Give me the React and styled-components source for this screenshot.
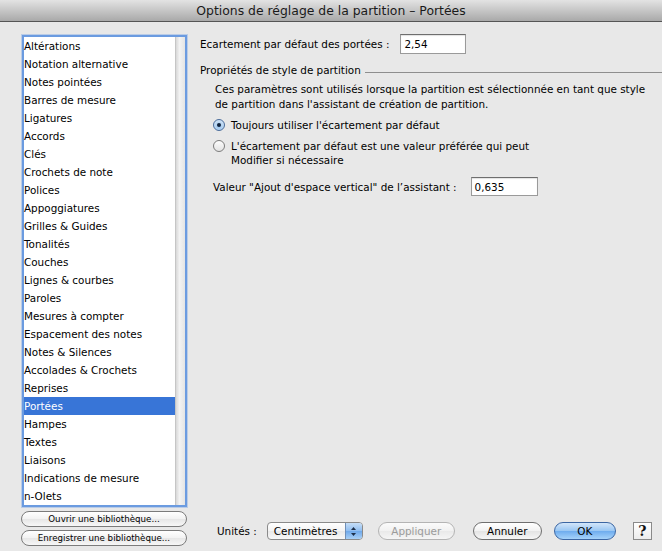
import React from 'react';
import styled, { createGlobalStyle } from 'styled-components';

const GlobalStyle = createGlobalStyle`
  html, body {
    margin: 0;
    padding: 0;
    background: #e8e8e8;
  }
  body {
    font-family: 'DejaVu Sans', 'Lucida Grande', sans-serif;
    font-size: 10.4px;
    color: #000;
  }
  * {
    box-sizing: border-box;
  }
`;

const Window = styled.div`
  width: 662px;
  height: 551px;
  display: flex;
  flex-direction: column;
  background: #e8e8e8;
  overflow: hidden;
`;

const TitleBar = styled.div`
  height: 22px;
  flex: none;
  display: flex;
  align-items: center;
  justify-content: center;
  background: linear-gradient(#e3e3e3, #a9a9a9);
  border-bottom: 1px solid #555;
  font-size: 12.4px;
  color: #1a1a1a;
`;

const Body = styled.div`
  flex: 1;
  display: flex;
  min-height: 0;
`;

const Sidebar = styled.div`
  width: 187px;
  flex: none;
  padding: 13px 0 0 21px;
  display: flex;
  flex-direction: column;
`;

const ListBox = styled.div`
  width: 165px;
  height: 472px;
  margin-left: 1px;
  display: flex;
  border: 2px solid #6b9be0;
  box-shadow: 0 0 0 1px rgba(130, 170, 230, 0.45);
  background: #fff;
`;

const Items = styled.ul`
  flex: 1;
  list-style: none;
  margin: 0;
  padding: 0;
`;

const Item = styled.li`
  height: 18px;
  line-height: 18px;
  padding-left: 0;
  white-space: nowrap;
  background: ${({ selected }) => (selected ? '#3875d7' : 'transparent')};
  color: ${({ selected }) => (selected ? '#fff' : '#000')};
`;

const ScrollTrack = styled.div`
  width: 10px;
  background: linear-gradient(to right, #b4b4b4 0, #d8d8d8 1px, #f3f3f3 45%, #e4e4e4 100%);
`;

const PillButton = styled.button`
  width: 166px;
  height: 16px;
  margin-top: ${({ gap }) => gap}px;
  padding: 0;
  border: 1px solid #7b7b7b;
  border-radius: 8px;
  background: linear-gradient(#ffffff, #f2f2f2 50%, #e6e6e6 51%, #f7f7f7);
  font-family: inherit;
  font-size: 8.7px;
  color: #000;
  line-height: 14px;
`;

const Main = styled.div`
  flex: 1;
  display: flex;
  flex-direction: column;
  padding: 12px 0 11px 13px;
`;

const FieldRow = styled.div`
  display: flex;
  align-items: center;
  height: ${({ h }) => h}px;
  margin-left: ${({ indent }) => indent || 0}px;
  margin-top: ${({ top }) => top || 0}px;
`;

const TextInput = styled.div`
  width: ${({ w }) => w}px;
  height: ${({ h }) => h}px;
  margin-left: ${({ gap }) => gap}px;
  border: 1px solid #9a9a9a;
  border-top-color: #6e6e6e;
  background: #fff;
  box-shadow: inset 0 1px 1px rgba(0, 0, 0, 0.12);
  padding-left: 3px;
  display: flex;
  align-items: center;
`;

const SectionHeader = styled.div`
  display: flex;
  align-items: flex-end;
  height: 14px;
  margin-top: 8px;
`;

const Rule = styled.div`
  flex: 1;
  height: 1px;
  background: #8e8e8e;
  margin: 0 0 3px 4px;
`;

const Description = styled.p`
  margin: 6px 0 0 15px;
  line-height: 15px;
`;

const RadioRow = styled.div`
  display: flex;
  align-items: flex-start;
  margin: ${({ top }) => top}px 0 0 13px;
  line-height: 14px;
`;

const Radio = styled.span`
  position: relative;
  flex: none;
  width: 12px;
  height: 12px;
  margin: 1px 6px 0 0;
  border-radius: 50%;
  border: 1px solid ${({ checked }) => (checked ? '#4a6c9b' : '#7c7c7c')};
  background: ${({ checked }) =>
    checked
      ? 'radial-gradient(circle at 50% 70%, #9cc6f0 0, #b9d6f2 45%, #dbe9f7 100%)'
      : 'linear-gradient(#fdfdfd, #e3e3e3)'};

  &::after {
    content: '';
    display: ${({ checked }) => (checked ? 'block' : 'none')};
    position: absolute;
    left: 3px;
    top: 3px;
    width: 4px;
    height: 4px;
    border-radius: 50%;
    background: #10223c;
  }
`;

const Footer = styled.div`
  margin-top: auto;
  display: flex;
  align-items: center;
  height: 18px;
  padding-left: 17px;
`;

const Select = styled.div`
  width: 96px;
  height: 18px;
  margin-left: 10px;
  display: flex;
  border: 1px solid #8a8a8a;
  border-radius: 4px;
  overflow: hidden;
  background: linear-gradient(#ffffff, #f3f3f3 50%, #e8e8e8 51%, #f8f8f8);
`;

const SelectLabel = styled.span`
  flex: 1;
  padding-left: 6px;
  line-height: 16px;
`;

const SelectArrows = styled.span`
  width: 17px;
  display: flex;
  align-items: center;
  justify-content: center;
  border-left: 1px solid #6f8fb8;
  background: linear-gradient(#c6def7, #8fbdf0 50%, #6ea8ea 51%, #a9d0f6);
`;

const Button = styled.button`
  width: ${({ w }) => w}px;
  height: 18px;
  margin-left: ${({ gap }) => gap}px;
  padding: 0;
  border: 1px solid ${({ variant }) => (variant === 'default' ? '#3b66a3' : variant === 'disabled' ? '#b4b4b4' : '#6f6f6f')};
  border-radius: 9px;
  font-family: inherit;
  font-size: 10.4px;
  line-height: 16px;
  color: ${({ variant }) => (variant === 'disabled' ? '#9b9b9b' : '#000')};
  background: ${({ variant }) =>
    variant === 'default'
      ? 'linear-gradient(#d3e6fa, #98c6f3 50%, #6eacee 51%, #a6d3fa)'
      : variant === 'disabled'
        ? 'linear-gradient(#fbfbfb, #f1f1f1 50%, #e9e9e9 51%, #f5f5f5)'
        : 'linear-gradient(#ffffff, #f2f2f2 50%, #e4e4e4 51%, #f6f6f6)'};
`;

const HelpButton = styled.button`
  width: 19px;
  height: 18px;
  margin-left: 17px;
  padding: 0;
  border: 1px solid #8a8a8a;
  background: linear-gradient(#ffffff, #ececec);
  font-family: 'DejaVu Serif', serif;
  font-weight: bold;
  font-size: 14px;
  line-height: 16px;
  color: #111;
`;

const items = [
  'Altérations',
  'Notation alternative',
  'Notes pointées',
  'Barres de mesure',
  'Ligatures',
  'Accords',
  'Clés',
  'Crochets de note',
  'Polices',
  'Appoggiatures',
  'Grilles & Guides',
  'Tonalités',
  'Couches',
  'Lignes & courbes',
  'Paroles',
  'Mesures à compter',
  'Espacement des notes',
  'Notes & Silences',
  'Accolades & Crochets',
  'Reprises',
  'Portées',
  'Hampes',
  'Textes',
  'Liaisons',
  'Indications de mesure',
  'n-Olets',
];

export default function App() {
  return (
    <Window>
      <GlobalStyle />
      <TitleBar>Options de réglage de la partition – Portées</TitleBar>
      <Body>
        <Sidebar>
          <ListBox>
            <Items>
              {items.map((label) => (
                <Item key={label} selected={label === 'Portées'}>
                  {label}
                </Item>
              ))}
            </Items>
            <ScrollTrack />
          </ListBox>
          <PillButton gap={4}>Ouvrir une bibliothèque...</PillButton>
          <PillButton gap={3}>Enregistrer une bibliothèque...</PillButton>
        </Sidebar>
        <Main>
          <FieldRow h={20}>
            <span>Ecartement par défaut des portées :</span>
            <TextInput w={66} h={20} gap={11}>2,54</TextInput>
          </FieldRow>
          <SectionHeader>
            <span>Propriétés de style de partition</span>
            <Rule />
          </SectionHeader>
          <Description>
            Ces paramètres sont utilisés lorsque la partition est sélectionnée en tant que style
            <br />
            de partition dans l'assistant de création de partition.
          </Description>
          <RadioRow top={6}>
            <Radio checked />
            <span>Toujours utiliser l'écartement par défaut</span>
          </RadioRow>
          <RadioRow top={7}>
            <Radio />
            <span>
              L'écartement par défaut est une valeur préférée qui peut
              <br />
              Modifier si nécessaire
            </span>
          </RadioRow>
          <FieldRow h={19} indent={13} top={10}>
            <span>Valeur "Ajout d'espace vertical" de l’assistant :</span>
            <TextInput w={67} h={19} gap={14}>0,635</TextInput>
          </FieldRow>
          <Footer>
            <span>Unités :</span>
            <Select>
              <SelectLabel>Centimètres</SelectLabel>
              <SelectArrows>
                <svg width="7" height="11" viewBox="0 0 7 11">
                  <path d="M3.5 1 L6 4 L1 4 Z" fill="#1d2f4a" />
                  <path d="M3.5 10 L6 7 L1 7 Z" fill="#1d2f4a" />
                </svg>
              </SelectArrows>
            </Select>
            <Button w={77} gap={15} variant="disabled">Appliquer</Button>
            <Button w={69} gap={18}>Annuler</Button>
            <Button w={62} gap={12} variant="default">OK</Button>
            <HelpButton>?</HelpButton>
          </Footer>
        </Main>
      </Body>
    </Window>
  );
}
